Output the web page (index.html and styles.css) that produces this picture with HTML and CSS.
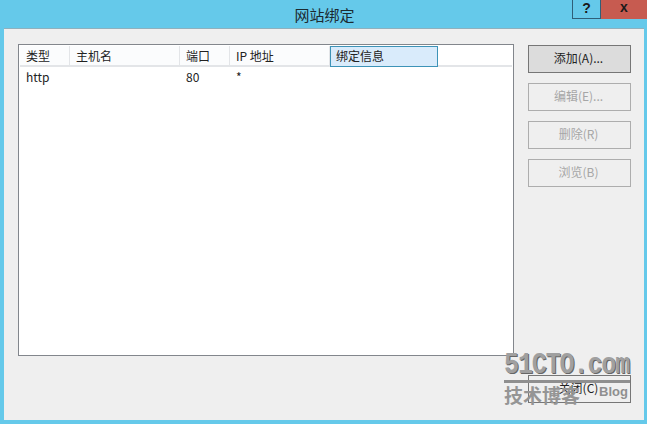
FILE: index.html
```html
<!DOCTYPE html>
<html>
<head>
    <title>网站绑定</title>
    <link rel="stylesheet" href="styles.css">
</head>
<body>

<div class="window">
    <div class="titlebar">
        <span class="title">网站绑定</span>
        <div class="caption">
            <div class="cap-help">?</div>
            <div class="cap-close">x</div>
        </div>
    </div>

    <div class="client">
        <div class="list">
            <div class="list-head">
                <div class="col col-type">类型</div>
                <div class="col col-host">主机名</div>
                <div class="col col-port">端口</div>
                <div class="col col-ip">IP 地址</div>
                <div class="col col-info">绑定信息</div>
            </div>
            <div class="list-row">
                <div class="col col-type">http</div>
                <div class="col col-host"></div>
                <div class="col col-port">80</div>
                <div class="col col-ip">*</div>
            </div>
        </div>

        <div class="buttons">
            <div class="actions">
                <button class="btn btn-default">添加(A)...</button>
                <button class="btn" disabled>编辑(E)...</button>
                <button class="btn" disabled>删除(R)</button>
                <button class="btn" disabled>浏览(B)</button>
            </div>
            <button class="btn btn-close">关闭(C)</button>
        </div>
    </div>
</div>

<!-- watermark over the corner -->
<div class="watermark">
    <div class="wm-site">51CTO.com</div>
    <div class="wm-rule"></div>
    <div class="wm-sub"><span class="wm-cn">技术博客</span><span class="wm-blog">Blog</span></div>
</div>

</body>
</html>
```

FILE: styles.css
```css
html, body {
    margin: 0;
    padding: 0;
}
body {
    width: 647px;
    height: 424px;
    overflow: hidden;
    position: relative;
    background-color: #65c9ea;
    font-family: "Noto Sans CJK SC", "Liberation Sans", sans-serif;
    font-size: 12px;
    color: #222;
}
.window {
    height: 424px;
    display: flex;
    flex-direction: column;
    padding: 0 3px 4px 4px;
    box-sizing: border-box;
}
.titlebar {
    height: 28px;
    flex-shrink: 0;
    display: flex;
    justify-content: center;
    align-items: center;
    position: relative;
}
.title {
    font-size: 15px;
    color: #1c2a30;
    margin-left: 1px;
}
.caption {
    position: absolute;
    top: 0;
    right: -3px;
    display: flex;
    height: 19px;
    font-family: "Liberation Sans", sans-serif;
    font-weight: bold;
    font-size: 14px;
}
.cap-help {
    width: 27px;
    border: 1px solid #2f5f78;
    border-top: none;
    border-right: none;
    text-align: center;
    line-height: 16px;
    color: #1a1a1a;
}
.cap-close {
    width: 46px;
    background-color: #c75b50;
    border-left: 1px solid #2f5f78;
    text-align: center;
    line-height: 15px;
    color: #1a1a1a;
}
.client {
    flex: 1;
    display: flex;
    gap: 14px;
    background-color: #efefef;
    border-top: 1px solid #8fb0bd;
    padding: 15px 13px 16px 14px;
    min-height: 0;
}
.list {
    width: 496px;
    height: 312px;
    box-sizing: border-box;
    border: 1px solid #82868c;
    background-color: #fff;
    padding: 1px;
}
.list-head {
    display: flex;
    height: 21px;
    box-sizing: border-box;
    border-bottom: 2px solid #e3e5e8;
    line-height: 20px;
}
.list-head .col {
    background-color: #fbfcfd;
    border-right: 1px solid #e3e5e8;
}
.list-row {
    display: flex;
    height: 21px;
    line-height: 20px;
}
.col {
    box-sizing: border-box;
    padding-left: 6px;
}
.col-type {
    width: 50px;
}
.col-host {
    width: 110px;
}
.col-port {
    width: 50px;
}
.col-ip {
    width: 100px;
}
.list-head .col-info {
    width: 108px;
    padding-left: 5px;
    background-color: #d9ebfb;
    border: 1px solid #3d93b7;
    height: 21px;
    line-height: 18px;
}
.buttons {
    width: 103px;
    height: 359px;
    display: flex;
    flex-direction: column;
    justify-content: space-between;
    padding-top: 1px;
    box-sizing: border-box;
}
.actions {
    display: flex;
    flex-direction: column;
    gap: 10px;
}
.btn {
    width: 103px;
    height: 28px;
    box-sizing: border-box;
    border: 1px solid #adadad;
    background-color: #efefef;
    font-family: inherit;
    font-size: 12px;
    color: #222;
    padding: 0 2px 3px 0;
}
.btn:disabled {
    color: #a6a6a6;
}
.btn-default {
    background-color: #dcdcdc;
    border-color: #767676;
}
.btn-close {
    border-color: #767676;
}
.watermark {
    position: absolute;
    left: 504px;
    top: 352px;
    width: 126px;
    font-family: "Liberation Sans", sans-serif;
    color: #a0a0a0;
}
.wm-site {
    font-family: "Liberation Mono", monospace;
    font-weight: bold;
    font-size: 25px;
    line-height: 28px;
    letter-spacing: -1.1px;
    text-shadow: 1px 1px 0 #666;
    transform: scaleY(1.15);
    white-space: nowrap;
}
.wm-rule {
    height: 3px;
    background-color: #8f8f8f;
}
.wm-sub {
    display: flex;
    justify-content: space-between;
    align-items: flex-start;
}
.wm-cn {
    font-family: "Noto Sans CJK SC", sans-serif;
    font-size: 19px;
    line-height: 24px;
    font-weight: bold;
    color: #959595;
}
.wm-blog {
    font-size: 13px;
    line-height: 15px;
    margin-right: 2px;
    margin-top: 1px;
    font-weight: bold;
    color: #8f8f8f;
}
```
